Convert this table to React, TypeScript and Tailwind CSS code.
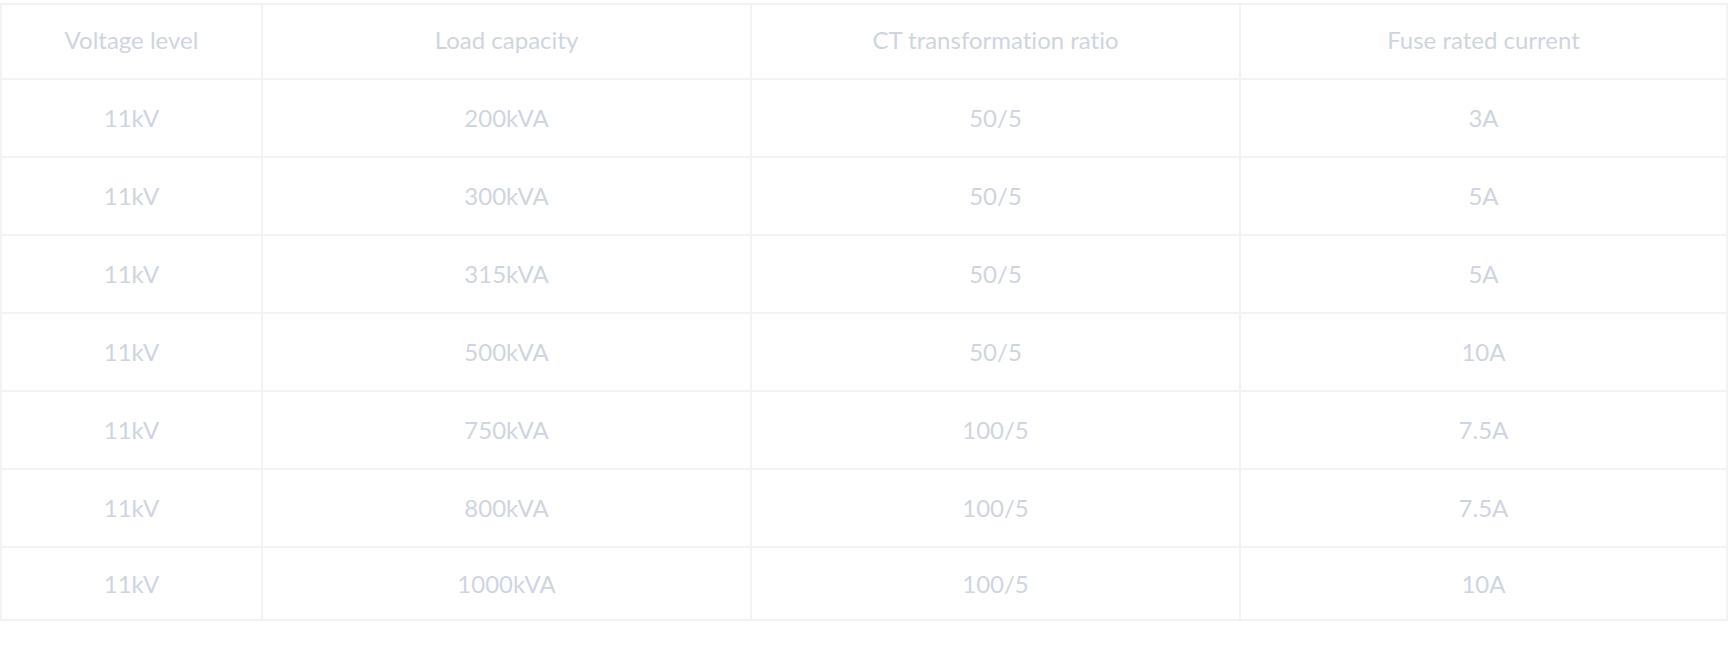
const rows = [
  ["11kV", "200kVA", "50/5", "3A"],
  ["11kV", "300kVA", "50/5", "5A"],
  ["11kV", "315kVA", "50/5", "5A"],
  ["11kV", "500kVA", "50/5", "10A"],
  ["11kV", "750kVA", "100/5", "7.5A"],
  ["11kV", "800kVA", "100/5", "7.5A"],
  ["11kV", "1000kVA", "100/5", "10A"],
];

const headers = ["Voltage level", "Load capacity", "CT transformation ratio", "Fuse rated current"];

export default function App() {
  return (
    <div className="w-[1729px] h-[646px] bg-white pt-[3px] font-['Lato',_sans-serif] text-[#cfd5e0] [font-variant-ligatures:none]">
      <table className="w-[1728px] table-fixed border-collapse border-2 border-[#f2f3f5] text-center text-[24px]">
        <colgroup>
          <col className="w-[261px]" />
          <col className="w-[489px]" />
          <col className="w-[489px]" />
          <col />
        </colgroup>
        <thead>
          <tr className="h-[75px]">
            {headers.map((h) => (
              <th key={h} className="border-2 border-[#f2f3f5] font-normal pb-[3px]">
                {h}
              </th>
            ))}
          </tr>
        </thead>
        <tbody>
          {rows.map((r, i) => (
            <tr key={i} className={i === rows.length - 1 ? "h-[73px]" : "h-[78px]"}>
              {r.map((c, j) => (
                <td key={j} className="border-2 border-[#f2f3f5]">
                  {c}
                </td>
              ))}
            </tr>
          ))}
        </tbody>
      </table>
    </div>
  );
}
